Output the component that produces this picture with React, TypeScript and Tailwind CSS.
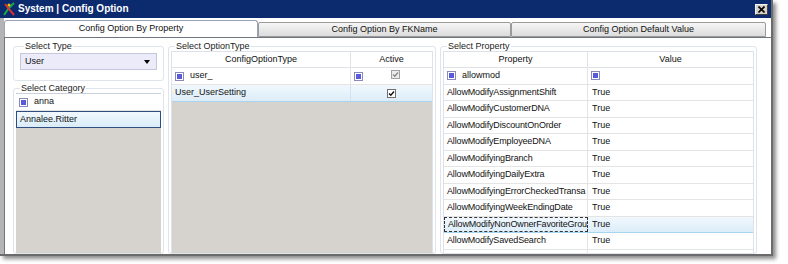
import React from 'react';

const FONT = { fontFamily: '"Liberation Sans", Arial, sans-serif' };

function FilterIcon() {
    return (
        <span className="inline-flex items-center justify-center w-[9px] h-[9px] border border-[#8a8ab8] bg-white shrink-0">
            <span className="w-[5px] h-[5px] bg-[#5a5adc]" />
        </span>
    );
}

function CheckBox({ muted = false }: { muted?: boolean }) {
    return (
        <span
            className={`inline-flex items-center justify-center w-[9px] h-[9px] border ${muted ? 'border-[#a0a0a0] bg-[#ececec]' : 'border-[#707070] bg-white'}`}
        >
            <svg width="7" height="7" viewBox="0 0 7 7">
                <path d="M1 3.5 L2.8 5.3 L6 1.5" fill="none" stroke={muted ? '#8a8a8a' : '#111'} strokeWidth="1.4" />
            </svg>
        </span>
    );
}

function Group({ title, className, children }: { title: string; className?: string; children: React.ReactNode }) {
    return (
        <fieldset className={`border border-[#dfe3ea] rounded-[3px] min-w-0 ${className ?? ''}`}>
            <legend className="ml-[4px] px-[1px] text-[9px] leading-[10px] text-[#222]">{title}</legend>
            {children}
        </fieldset>
    );
}

const properties = [
    'AllowModifyAssignmentShift',
    'AllowModifyCustomerDNA',
    'AllowModifyDiscountOnOrder',
    'AllowModifyEmployeeDNA',
    'AllowModifyingBranch',
    'AllowModifyingDailyExtra',
    'AllowModifyingErrorCheckedTransa',
    'AllowModifyingWeekEndingDate',
    'AllowModifyNonOwnerFavoriteGrou',
    'AllowModifySavedSearch',
    '',
];

export default function App() {
    return (
        <div className="w-[788px] h-[264px] bg-white overflow-hidden text-[#111]" style={FONT}>
            <div className="w-[773px] h-[256px] flex flex-col border-r-[2px] border-b-[2px] border-[#6b6b6b] shadow-[3px_3px_4px_rgba(0,0,0,0.45)] bg-white">
                {/* Title bar */}
                <div className="h-[18px] shrink-0 bg-[#0c2a6e] flex items-center pl-[2px] pr-[3px]">
                    <svg width="14" height="14" viewBox="0 0 14 14" className="mr-[2px]">
                        <path d="M2 13 L7 6 L12 1" stroke="#1aa84a" strokeWidth="2" fill="none" />
                        <path d="M3 2 L7 7 L12 13" stroke="#e53030" strokeWidth="2" fill="none" />
                        <circle cx="7" cy="3" r="1.5" fill="#f0c020" />
                    </svg>
                    <span className="text-white font-bold text-[10px] leading-none">System | Config Option</span>
                    <div className="ml-auto w-[13px] h-[11px] bg-[#d4d0c8] border border-[#f4f4f4] border-r-[#404040] border-b-[#404040] flex items-center justify-center">
                        <svg width="7" height="7" viewBox="0 0 7 7">
                            <path d="M0.5 0.5 L6.5 6.5 M6.5 0.5 L0.5 6.5" stroke="#000" strokeWidth="1.6" />
                        </svg>
                    </div>
                </div>

                {/* Body */}
                <div className="flex-1 flex flex-col border-l-[4px] border-[#b4b4b4] bg-white min-h-0">
                    {/* Tabs */}
                    <div className="h-[19px] shrink-0 flex pt-[2px] pr-[5px]">
                        <div className="w-[254px] h-[17px] bg-white border border-b-0 border-[#9aa3b3] rounded-t-[3px] flex items-center justify-center text-[9px]">
                            Config Option By Property
                        </div>
                        <div className="w-[253px] h-[15px] mt-[2px] bg-gradient-to-b from-[#f6f6f6] to-[#dcdcdc] border border-[#9a9a9a] rounded-t-[2px] flex items-center justify-center text-[9px]">
                            Config Option By FKName
                        </div>
                        <div className="flex-1 h-[15px] mt-[2px] bg-gradient-to-b from-[#f6f6f6] to-[#dcdcdc] border border-[#9a9a9a] rounded-t-[2px] flex items-center justify-center text-[9px]">
                            Config Option Default Value
                        </div>
                    </div>

                    {/* Panel */}
                    <div className="flex-1 min-h-0 flex gap-[4px] bg-white border-t border-l border-[#6f7680] pl-[8px] pr-[14px] pt-[3px] overflow-hidden">
                        {/* Left column */}
                        <div className="w-[151px] shrink-0 flex flex-col gap-[2px]">
                            <Group title="Select Type" className="h-[40px] px-[6px]">
                                <div className="mt-[2px] h-[17px] bg-[#ebebfa] border border-[#c6c6dc] flex items-center pl-[4px] pr-[6px] text-[9px]">
                                    <span>User</span>
                                    <span className="ml-auto w-0 h-0 border-l-[3px] border-r-[3px] border-t-[4px] border-l-transparent border-r-transparent border-t-black" />
                                </div>
                            </Group>
                            <Group title="Select Category" className="flex-1 px-[2px]">
                                <div className="h-full bg-[#d6d3ce] border-t border-[#c8d0dc]">
                                    <div className="h-[17px] bg-white border-b border-[#e4e4e4] flex items-center gap-[6px] pl-[3px] text-[9px]">
                                        <FilterIcon />
                                        <span>anna</span>
                                    </div>
                                    <div className="h-[17px] bg-gradient-to-b from-[#f1f8fd] to-[#d9ecf9] border border-[#2f4d7e] flex items-center pl-[3px] text-[9px]">
                                        Annalee.Ritter
                                    </div>
                                </div>
                            </Group>
                        </div>

                        {/* Middle column */}
                        <Group title="Select OptionType" className="w-[268px] shrink-0 px-[2px]">
                            <div className="h-full bg-[#d6d3ce] border border-[#dde2ea] border-b-0">
                                <div className="flex h-[16px] bg-white border-b border-[#dfe3e8] text-[9px]">
                                    <div className="w-[179px] border-r border-[#dfe3e8] flex items-center justify-center">ConfigOptionType</div>
                                    <div className="flex-1 flex items-center justify-center">Active</div>
                                </div>
                                <div className="flex h-[17px] bg-white border-b border-[#e4e4e4] text-[9px]">
                                    <div className="w-[179px] border-r border-[#e4e4e4] flex items-center gap-[6px] pl-[3px]">
                                        <FilterIcon />
                                        <span>user_</span>
                                    </div>
                                    <div className="flex-1 flex items-center pl-[3px]">
                                        <FilterIcon />
                                        <span className="ml-[28px]"><CheckBox muted /></span>
                                    </div>
                                </div>
                                <div className="flex h-[17px] bg-gradient-to-b from-[#f1f8fd] to-[#dcedf9] border-b border-[#a9d4ef] text-[9px]">
                                    <div className="w-[179px] border-r border-[#cfe3f1] flex items-center pl-[3px]">User_UserSetting</div>
                                    <div className="flex-1 flex items-center justify-center">
                                        <CheckBox />
                                    </div>
                                </div>
                            </div>
                        </Group>

                        {/* Right column */}
                        <Group title="Select Property" className="flex-1 px-[2px]">
                            <div className="h-full bg-white border border-[#dde2ea] border-b-0">
                                <div className="flex h-[16px] border-b border-[#dfe3e8] text-[9px]">
                                    <div className="w-[144px] border-r border-[#dfe3e8] flex items-center justify-center">Property</div>
                                    <div className="flex-1 flex items-center justify-center">Value</div>
                                </div>
                                <div className="flex h-[16.5px] border-b border-[#e4e4e4] text-[9px]">
                                    <div className="w-[144px] border-r border-[#e4e4e4] flex items-center gap-[6px] pl-[3px]">
                                        <FilterIcon />
                                        <span>allowmod</span>
                                    </div>
                                    <div className="flex-1 flex items-center pl-[3px]">
                                        <FilterIcon />
                                    </div>
                                </div>
                                {properties.map((p, i) => {
                                    const sel = i === 8;
                                    return (
                                        <div
                                            key={i}
                                            className={`flex h-[16.5px] border-b text-[9px] ${sel ? 'bg-gradient-to-b from-[#f1f8fd] to-[#dcedf9] border-[#a9d4ef]' : 'border-[#e4e4e4]'}`}
                                        >
                                            <div
                                                className={`w-[144px] shrink-0 flex items-center pl-[3px] whitespace-nowrap overflow-hidden tracking-[-0.15px] ${sel ? 'border border-dashed border-[#333]' : 'border-r border-[#e4e4e4]'}`}
                                            >
                                                {p}
                                            </div>
                                            <div className="flex-1 flex items-center pl-[4px]">{p ? 'True' : ''}</div>
                                        </div>
                                    );
                                })}
                            </div>
                        </Group>
                    </div>
                </div>
            </div>
        </div>
    );
}
